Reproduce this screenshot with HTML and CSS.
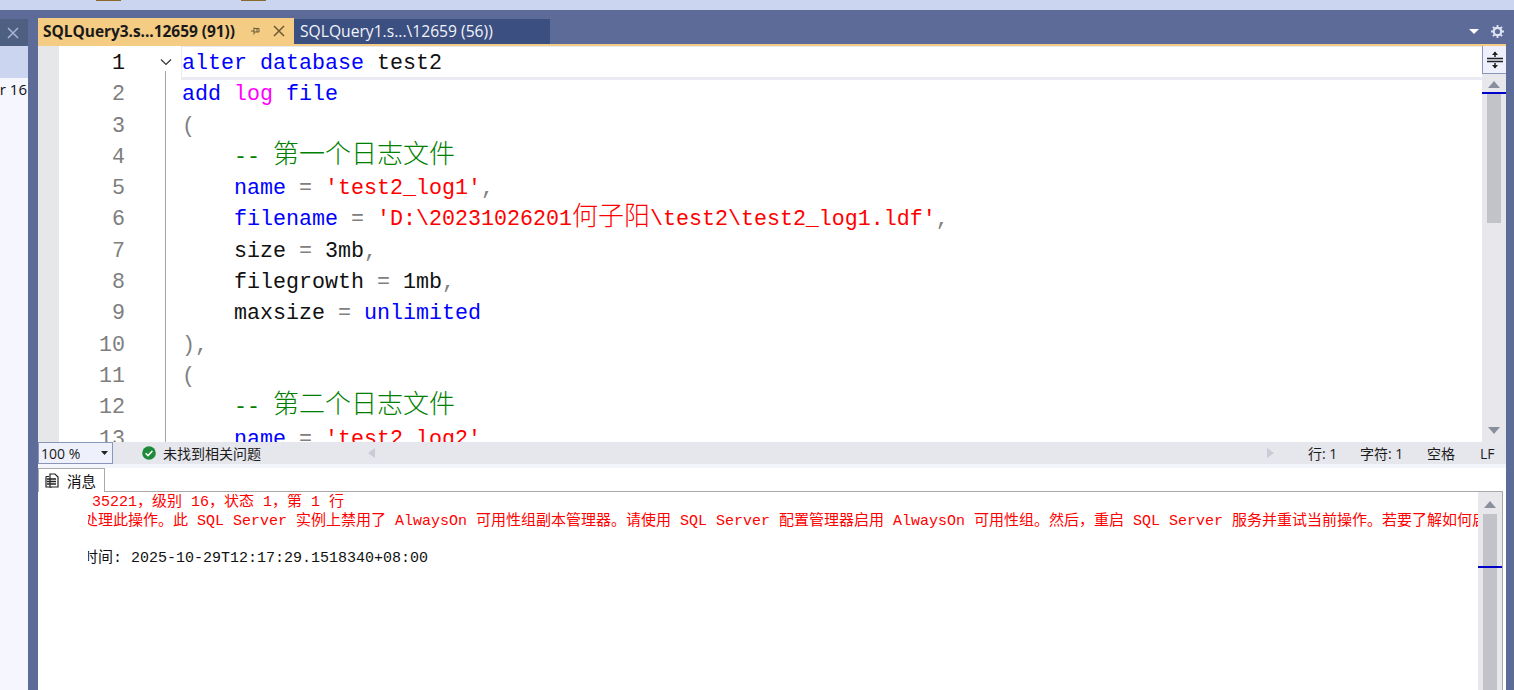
FILE: index.html
```html
<!DOCTYPE html>
<html lang="zh">
<head>
<meta charset="utf-8">
<title>SQLQuery3</title>
<link rel="stylesheet" href="styles.css">
</head>
<body>
<div class="strip"><i class="mark mark-a"></i><i class="mark mark-b"></i></div>
<div class="workspace">
  <aside class="side">
    <div class="side-head"><svg width="12" height="12" viewBox="0 0 12 12"><path d="M1 1l10 10M11 1L1 11" stroke="#a9b5d6" stroke-width="1.5" fill="none"/></svg></div>
    <div class="side-sel"></div>
    <div class="side-body"><div class="side-text">SQL Server 16</div></div>
  </aside>
  <main class="main">
    <div class="tabs">
      <div class="tab-active">
        <span class="tab-title">SQLQuery3.s...12659 (91))</span>
        <svg class="pin" width="11" height="11" viewBox="0 0 11 11"><path d="M4 1.500v7M4 2.500h5v3.500H4M1 5h3M7 6V2.500" stroke="#6b5a36" stroke-width="1" fill="none"/></svg>
        <svg class="tab-x" width="12" height="12" viewBox="0 0 12 12"><path d="M1 1l10 10M11 1L1 11" stroke="#6b5a36" stroke-width="1.500" fill="none"/></svg>
      </div>
      <div class="tab-idle">SQLQuery1.s...\12659 (56))</div>
      <div class="tab-tools">
        <svg width="10" height="5" viewBox="0 0 10 5"><path d="M0 0h10L5 5z" fill="#fff"/></svg>
        <svg width="13" height="13" viewBox="0 0 13 13"><circle cx="6.500" cy="6.500" r="3.700" fill="none" stroke="#dfe4f3" stroke-width="2.200"/><path d="M6.500 0v2.500M6.500 10.500V13M0 6.500h2.500M10.500 6.500H13M1.900 1.900l1.800 1.800M9.300 9.300l1.800 1.800M11.100 1.900L9.300 3.700M3.700 9.300l-1.800 1.800" stroke="#dfe4f3" stroke-width="1.800"/></svg>
      </div>
    </div>
    <div class="accent"></div>
    <div class="editor">
      <div class="margin"></div>
      <div class="numbers">
        <div class="num current">1</div><div class="num">2</div><div class="num">3</div><div class="num">4</div><div class="num">5</div><div class="num">6</div><div class="num">7</div><div class="num">8</div><div class="num">9</div><div class="num">10</div><div class="num">11</div><div class="num">12</div><div class="num">13</div>
      </div>
      <div class="fold">
        <svg class="chev" width="12" height="8" viewBox="0 0 12 8"><path d="M1 1.500l5 5 5-5" stroke="#333" stroke-width="1.200" fill="none"/></svg>
        <div class="fold-line"></div>
      </div>
      <div class="code">
        <div class="line first"><span class="kw">alter</span> <span class="kw">database</span> test2</div>
        <div class="line"><span class="kw">add</span> <span class="fn">log</span> <span class="kw">file</span></div>
        <div class="line"><span class="op">(</span></div>
        <div class="line">    <span class="cm">-- <span class="cjk">第一个日志文件</span></span></div>
        <div class="line">    <span class="kw">name</span> <span class="op">=</span> <span class="st">'test2_log1'</span><span class="op">,</span></div>
        <div class="line">    <span class="kw">filename</span> <span class="op">=</span> <span class="st">'D:\20231026201<span class="cjk">何子阳</span>\test2\test2_log1.ldf'</span><span class="op">,</span></div>
        <div class="line">    size <span class="op">=</span> 3mb<span class="op">,</span></div>
        <div class="line">    filegrowth <span class="op">=</span> 1mb<span class="op">,</span></div>
        <div class="line">    maxsize <span class="op">=</span> <span class="kw">unlimited</span></div>
        <div class="line"><span class="op">),</span></div>
        <div class="line"><span class="op">(</span></div>
        <div class="line">    <span class="cm">-- <span class="cjk">第二个日志文件</span></span></div>
        <div class="line">    <span class="kw">name</span> <span class="op">=</span> <span class="st">'test2_log2'</span><span class="op">,</span></div>
      </div>
      <div class="vscroll">
        <div class="split"><svg width="16" height="18" viewBox="0 0 16 18"><path d="M0 7.500h16M0 10.500h16" stroke="#222" stroke-width="1.500"/><path d="M8 1v5M8 12v5" stroke="#222" stroke-width="1.500"/><path d="M5 4l3-3.500L11 4zM5 14l3 3.500 3-3.500z" fill="#222"/></svg></div>
        <div class="arrow-cell"><svg width="12" height="7" viewBox="0 0 12 7"><path d="M6 0l6 7H0z" fill="#8a8f9e"/></svg></div>
        <div class="track">
          <div class="thumb"></div>
          <i class="caret-mark"></i>
        </div>
        <div class="arrow-cell low"><svg width="12" height="7" viewBox="0 0 12 7"><path d="M0 0h12L6 7z" fill="#8a8f9e"/></svg></div>
      </div>
    </div>
    <div class="status">
      <div class="zoom"><span>100 %</span><svg width="7" height="4" viewBox="0 0 7 4"><path d="M0 0h7L3.500 4z" fill="#222"/></svg></div>
      <div class="health">
        <svg width="14" height="14" viewBox="0 0 14 14"><circle cx="7" cy="7" r="6.800" fill="#1e8a3a"/><path d="M3.600 7.200l2.400 2.400 4.400-4.600" stroke="#fff" stroke-width="1.500" fill="none"/></svg>
        <span>未找到相关问题</span>
      </div>
      <div class="hbar">
        <svg width="7" height="10" viewBox="0 0 7 10"><path d="M7 0v10L0 5z" fill="#c9cbd6"/></svg>
        <svg width="7" height="10" viewBox="0 0 7 10"><path d="M0 0v10l7-5z" fill="#c9cbd6"/></svg>
      </div>
      <div class="pos pos-line">行: 1</div>
      <div class="pos pos-char">字符: 1</div>
      <div class="pos pos-space">空格</div>
      <div class="pos pos-eol">LF</div>
    </div>
    <div class="divider"></div>
    <div class="result-tabs">
      <div class="result-tab">
        <svg width="14" height="15" viewBox="0 0 14 15"><path d="M1 3.500h3M1 3.500v10.500h6" fill="none" stroke="#222" stroke-width="1.200"/><path d="M5 1h5l3 3v10H5z" fill="#fff" stroke="#222" stroke-width="1.200"/><path d="M2 6h9M2 8.500h9M2 11h9" stroke="#222" stroke-width="1.300"/></svg>
        <span>消息</span>
      </div>
    </div>
    <div class="results">
      <div class="messages">
        <div class="msg-inner">
          <div class="msg err">消息 35221，级别 16，状态 1，第 1 行</div>
          <div class="msg err second">无法处理此操作。此 SQL Server 实例上禁用了 AlwaysOn 可用性组副本管理器。请使用 SQL Server 配置管理器启用 AlwaysOn 可用性组。然后，重启 SQL Server 服务并重试当前操作。若要了解如何启用 AlwaysOn 可用性组，请参阅联机丛书。</div>
          <div class="msg blank">&nbsp;</div>
          <div class="msg">完成时间: 2025-10-29T12:17:29.1518340+08:00</div>
        </div>
      </div>
      <div class="rscroll">
        <div class="r-arrow"><svg width="12" height="7" viewBox="0 0 12 7"><path d="M6 0l6 7H0z" fill="#8a8f9e"/></svg></div>
        <div class="r-track"><div class="r-thumb"></div><i class="r-mark"></i></div>
      </div>
    </div>
  </main>
</div>
</body>
</html>
```
FILE: styles.css
```css
* { box-sizing: border-box; }
html, body { margin: 0; height: 690px; overflow: hidden; }
body { width: 1514px; background: #5d6b99; font-family: "Open Sans", "Noto Sans CJK SC", sans-serif; display: flex; flex-direction: column; }

.strip { height: 10px; background: #ccd5f0; display: flex; align-items: flex-start; padding-left: 96px; gap: 120px; flex: none; }
.mark { display: block; width: 25px; height: 1px; background: #8a6a2c; }

.workspace { flex: 1; display: flex; min-height: 0; }

.side { width: 28px; flex: none; margin-top: 9px; display: flex; flex-direction: column; overflow: hidden; }
.side-head { height: 27px; background: #4d6082; display: flex; align-items: center; justify-content: flex-end; padding-right: 9px; flex: none; }
.side-sel { height: 32px; background: #ccd5f0; flex: none; }
.side-body { flex: 1; background: #f5f6fe; }
.side-text { font-size: 15px; white-space: nowrap; direction: rtl; width: 27px; overflow: hidden; line-height: 20px; margin-top: 1px; color: #111; }

.main { width: 1468px; margin-left: 10px; display: flex; flex-direction: column; min-height: 0; }

.tabs { margin-top: 8px; height: 26px; display: flex; align-items: flex-start; flex: none; }
.tab-active { width: 256px; height: 26px; background: #f5cc84; display: flex; align-items: center; padding-left: 5px; flex: none; }
.tab-title { font-size: 15.5px; font-weight: 700; color: #1a1a1a; width: 207px; white-space: nowrap; letter-spacing: -0.05px; }
.pin { margin-left: 0; }
.tab-x { margin-left: 12px; }
.tab-idle { width: 256px; height: 25px; margin-top: 1px; background: #3b4f81; color: #f2f4fb; font-size: 15.65px; line-height: 24px; padding-left: 6px; white-space: nowrap; flex: none; }
.tab-tools { flex: 1; height: 26px; display: flex; align-items: center; justify-content: flex-end; gap: 12px; padding-right: 2px; }
.accent { height: 2px; background: #f5cc84; flex: none; }

.editor { height: 396px; flex: none; display: flex; background: #fff; overflow: hidden; }
.margin { width: 21px; background: #e6e7e8; flex: none; }
.numbers { width: 66px; flex: none; padding-top: 2px; text-align: right; font-family: "Liberation Mono", monospace; font-size: 21.67px; color: #7e7e7e; }
.num { height: 31.3px; line-height: 31.3px; }
.num.current { color: #111; }
.fold { width: 56px; flex: none; padding-left: 34px; }
.chev { display: block; margin: 12px 0 0 1px; }
.fold-line { width: 1px; height: 380px; background: #a5a5a5; margin: 5px 0 0 6px; }
.code { flex: 1; min-width: 0; padding: 2px 0 0 1px; font-family: "Liberation Mono", "Noto Sans CJK SC", monospace; font-size: 21.67px; color: #111; }
.line { height: 31.3px; line-height: 31.3px; white-space: pre; }
.line.first { position: relative; }
.line.first::after { content: ""; position: absolute; left: -1px; right: 0; top: -2px; height: 30px; border-top: 1px solid #eaeaf2; border-left: 1px solid #eaeaf2; border-bottom: 3px solid #eaeaf2; }
.cjk { font-family: "Noto Sans CJK SC", sans-serif; font-size: 26px; font-weight: 300; line-height: 0; }
.kw { color: #0000ff; }
.fn { color: #ff00ff; }
.st { color: #ff0000; }
.cm { color: #008000; }
.op { color: #808080; }

.vscroll { width: 24px; flex: none; background: #e8e8ec; display: flex; flex-direction: column; }
.split { height: 28px; background: #eef0fc; border-left: 1px solid #8a96b8; border-bottom: 1px solid #8a96b8; display: flex; align-items: center; justify-content: center; flex: none; }
.arrow-cell { height: 18px; display: flex; align-items: center; justify-content: center; flex: none; padding-top: 2px; }
.track { flex: 1; position: relative; display: flex; justify-content: center; }
.thumb { width: 14px; height: 130px; background: #c2c3c9; margin-top: 1px; }
.caret-mark { position: absolute; left: 0; right: 0; top: 0; height: 2px; background: #0000c8; }
.arrow-cell.low { height: 24px; padding-top: 0; }

.status { height: 22px; background: #e6e7ed; display: flex; align-items: center; font-size: 14px; color: #1b1b1b; flex: none; }
.zoom { width: 75px; height: 22px; background: #eef0fc; border: 1px solid #8a96b8; display: flex; align-items: center; justify-content: space-between; padding: 0 4px 0 2px; font-size: 14px; flex: none; }
.health { display: flex; align-items: center; gap: 7px; margin-left: 29px; width: 226px; flex: none; }
.hbar { width: 906px; display: flex; justify-content: space-between; flex: none; }
.pos { white-space: nowrap; flex: none; }
.pos-line { margin-left: 34px; width: 52px; }
.pos-char { width: 67px; }
.pos-space { width: 53px; }

.divider { height: 4px; background: #f5f6fb; flex: none; }
.result-tabs { height: 23px; background: #fff; flex: none; }
.result-tab { width: 67px; height: 24px; background: #fff; border: 1px solid #a9a9a9; border-bottom: none; display: flex; align-items: center; gap: 8px; padding-left: 6px; font-size: 14.5px; color: #111; position: relative; z-index: 1; }

.results { flex: 1; min-height: 0; background: #fff; display: flex; padding: 0 3px 0 0; }
.messages { flex: 1; min-width: 0; border-top: 1px solid #a9a9a9; padding: 2px 0 0 50px; display: flex; }
.msg-inner { flex: 1; min-width: 0; overflow: hidden; text-indent: -35px; }
.msg { font-family: "Liberation Mono", "Noto Sans CJK SC", monospace; font-size: 15px; height: 18.500px; line-height: 18.500px; white-space: nowrap; color: #111; }
.msg.err { color: #ff0000; }
.msg.second { margin-top: 0.500px; }
.rscroll { width: 25px; flex: none; display: flex; flex-direction: column; background: #e8e8ec; border-top: 1px solid #a9a9a9; border-right: 1px solid #a9a9a9; }
.r-arrow { height: 22px; display: flex; align-items: center; justify-content: center; flex: none; padding-top: 2px; }
.r-track { flex: 1; position: relative; display: flex; justify-content: center; }
.r-thumb { width: 14px; height: 200px; background: #c2c3c9; }
.r-mark { position: absolute; left: 0; right: 0; top: 52px; height: 2px; background: #0000c8; }
```
